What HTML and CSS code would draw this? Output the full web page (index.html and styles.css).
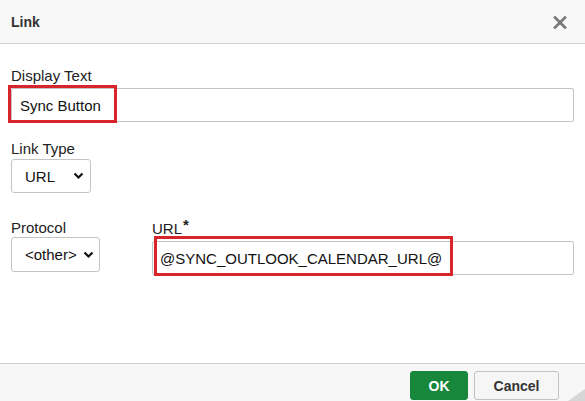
FILE: index.html
```html
<!DOCTYPE html>
<html lang="en">
<head>
  <meta charset="UTF-8" />
  <title>Link</title>
  <link rel="stylesheet" href="styles.css">
</head>
<body>

  <div class="dialog">
    <div class="dialog-head">
      <span class="dialog-title">Link</span>
      <svg class="close" width="14" height="13" viewBox="0 0 14 13">
        <path d="M2 1.5 L12 11.5 M12 1.5 L2 11.5" stroke="#777" stroke-width="2.6" stroke-linecap="square" fill="none"/>
      </svg>
    </div>

    <div class="dialog-body">
      <div class="field field-text">
        <label>Display Text</label>
        <div class="mark-wrap">
          <input class="input" type="text" value="Sync Button">
          <span class="mark mark-text"></span>
        </div>
      </div>

      <div class="field field-type">
        <label>Link Type</label>
        <div class="select select-type">
          <span>URL</span>
          <svg width="11" height="8" viewBox="0 0 11 8"><path d="M1.5 1.5 L5.5 5.5 L9.5 1.5" stroke="#111" stroke-width="2.2" fill="none"/></svg>
        </div>
      </div>

      <div class="row">
        <div class="field field-protocol">
          <label>Protocol</label>
          <div class="select select-protocol">
            <span>&lt;other&gt;</span>
            <svg width="11" height="8" viewBox="0 0 11 8"><path d="M1.5 1.5 L5.5 5.5 L9.5 1.5" stroke="#111" stroke-width="2.2" fill="none"/></svg>
          </div>
        </div>
        <div class="field field-url">
          <label>URL<b class="req">*</b></label>
          <div class="mark-wrap">
            <input class="input input-url" type="text" value="@SYNC_OUTLOOK_CALENDAR_URL@">
            <span class="mark mark-url"></span>
          </div>
        </div>
      </div>
    </div>

    <div class="dialog-foot">
      <button class="btn btn-ok">OK</button>
      <button class="btn btn-cancel">Cancel</button>
      <span class="grip"></span>
    </div>
  </div>

</body>
</html>
```

FILE: styles.css
```css
body {
  margin: 0;
  font-family: "Liberation Sans", Arial, sans-serif;
  background: #fff;
  color: #222;
}

.dialog {
  position: relative;
  width: 585px;
  height: 401px;
  display: flex;
  flex-direction: column;
  background: #fff;
}

.dialog-head {
  height: 43px;
  background: #f8f8f8;
  border-bottom: 1px solid #d0d0d0;
  display: flex;
  align-items: center;
  justify-content: space-between;
  padding: 0 18px 0 11px;
}

.dialog-title {
  font-size: 14px;
  font-weight: bold;
  color: #333;
  line-height: 16px;
  padding-top: 1px;
}

.close {
  margin-top: 2px;
}

.dialog-body {
  flex: 1;
  padding: 23px 11px 0 11px;
}

.field label {
  display: block;
  font-size: 15px;
  line-height: 17px;
  color: #222;
}

.req {
  font-size: 15px;
  position: relative;
  top: -4px;
  margin-left: 1px;
}

.mark-wrap {
  position: relative;
}

.input {
  display: block;
  box-sizing: border-box;
  width: 100%;
  height: 34px;
  border: 1px solid #c4c4c4;
  border-radius: 2px;
  padding: 0 8px;
  font-family: "Liberation Sans", Arial, sans-serif;
  font-size: 15px;
  color: #111;
  background: #fff;
  outline: none;
}

.mark {
  position: absolute;
  box-sizing: border-box;
  border: 3px solid #d8242b;
  pointer-events: none;
}

.field-text .mark-wrap {
  margin-top: 4px;
  margin-right: 0;
}

.mark-text {
  left: -3px;
  top: -3px;
  width: 109px;
  height: 38px;
}

.field-type {
  margin-top: 18px;
}

.select {
  box-sizing: border-box;
  height: 34px;
  border: 1px solid #c4c4c4;
  border-radius: 3px;
  display: flex;
  align-items: center;
  justify-content: space-between;
  padding: 0 6px 0 13px;
  font-size: 15px;
  color: #111;
  background: #fff;
}

.select-type {
  width: 80px;
  margin-top: 2px;
}

.select-protocol {
  width: 89px;
  height: 35px;
  margin-top: 1px;
  padding-left: 13px;
  padding-right: 5px;
}

.row {
  display: flex;
  gap: 52px;
  margin-top: 26px;
}

.field-url {
  flex: 1;
  padding-top: 1px;
}

.field-url .mark-wrap {
  margin-top: 4px;
}

.input-url {
  padding-left: 7px;
}

.mark-url {
  left: 2px;
  top: -5px;
  width: 299px;
  height: 40px;
}

.dialog-foot {
  height: 38px;
  background: #f7f7f7;
  border-top: 1px solid #cfcfcf;
  display: flex;
  justify-content: flex-end;
  align-items: flex-start;
  gap: 6px;
  padding: 7px 26px 0 0;
  box-sizing: border-box;
}

.btn {
  height: 29px;
  border-radius: 3px;
  font-family: "Liberation Sans", Arial, sans-serif;
  font-size: 14px;
  font-weight: bold;
  cursor: pointer;
}

.btn-ok {
  width: 58px;
  background: #17873c;
  border: 1px solid #17873c;
  color: #fff;
}

.btn-cancel {
  width: 85px;
  background: #f6f6f6;
  border: 1px solid #c2c2c2;
  color: #333;
}

.grip {
  position: absolute;
  right: 0;
  bottom: 0;
  width: 0;
  height: 0;
  border-left: 17px solid transparent;
  border-bottom: 12px solid #d6d6d6;
}
```
